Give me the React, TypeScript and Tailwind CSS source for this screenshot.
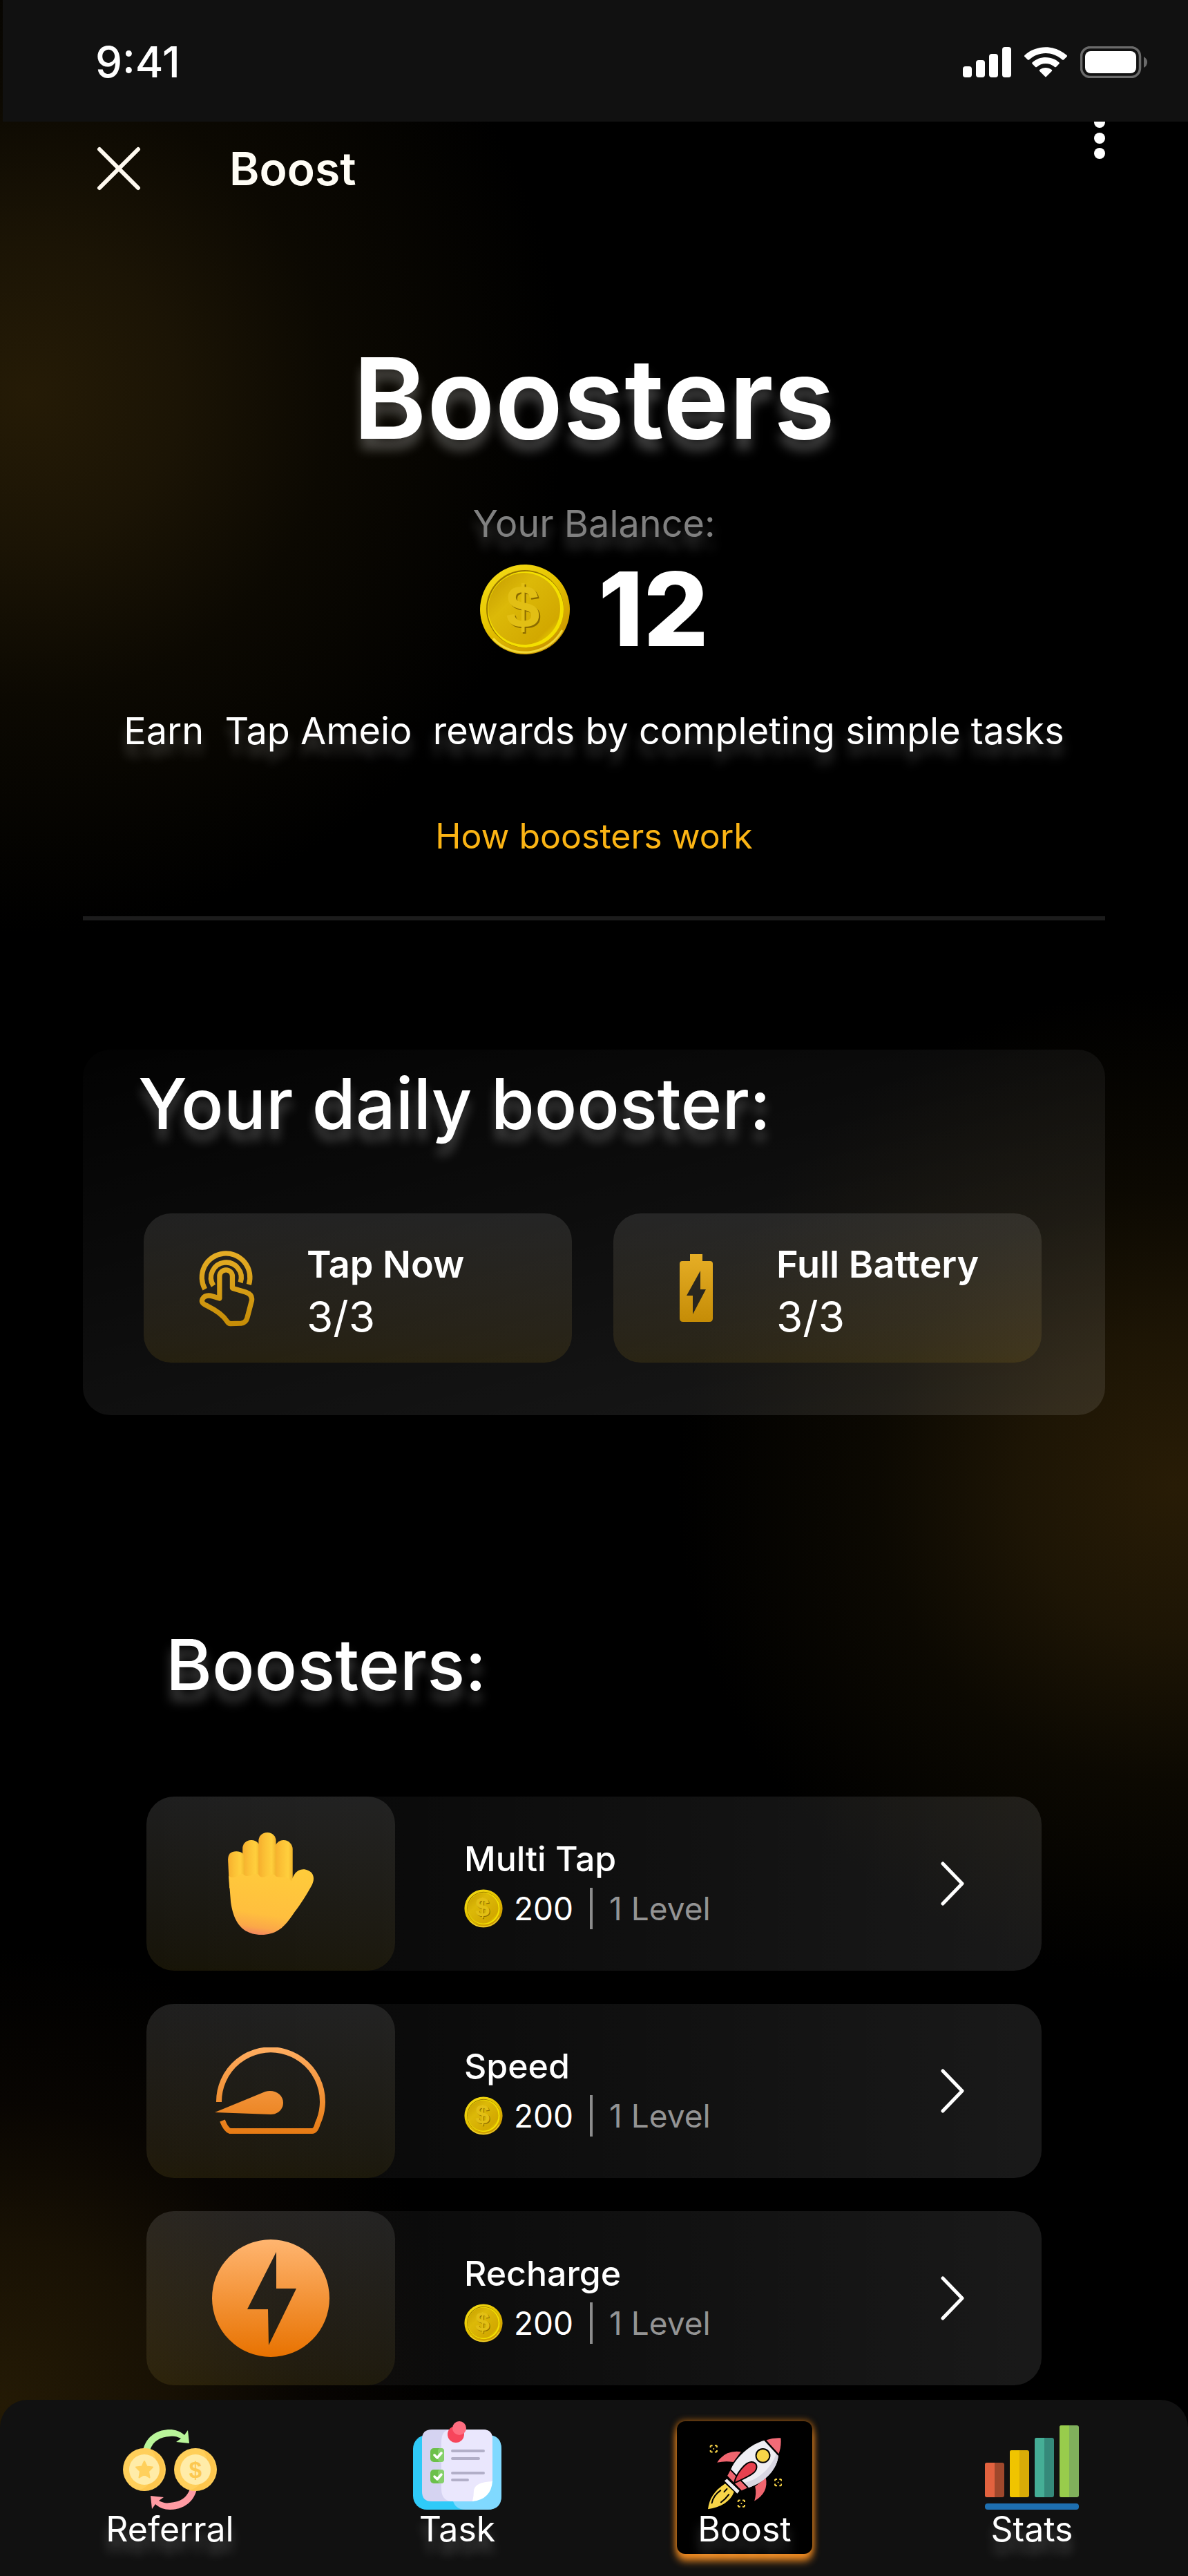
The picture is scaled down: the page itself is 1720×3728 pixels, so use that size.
import type { ReactNode } from "react";

const softGlow = "[text-shadow:0_16px_16px_rgba(255,255,255,0.25)]";

function SignalIcon() {
  return (
    <svg viewBox="0 0 70 44" className="h-[44px] w-[70px]" fill="#fff" aria-hidden="true">
      <rect x="0" y="28" width="13" height="16" rx="4" />
      <rect x="19" y="19" width="13" height="25" rx="4" />
      <rect x="38" y="10" width="13" height="34" rx="4" />
      <rect x="57" y="0" width="13" height="44" rx="4" />
    </svg>
  );
}

function WifiIcon() {
  return (
    <svg viewBox="0.4 0.1 16.2 11.4" className="h-[44px] w-[62px]" fill="#fff" aria-hidden="true">
      <path d="M8.5 2.4c2.3 0 4.6.9 6.3 2.5.1.1.3.1.5 0l1.2-1.2c.1-.1.1-.2.1-.2s0-.2-.1-.3C12-.9 5-.9.5 3.2c0 .1-.1.2-.1.3s0 .2.1.2l1.2 1.2c.1.1.3.1.5 0C3.9 3.3 6.2 2.4 8.5 2.4Z" />
      <path d="M8.5 6.3c1.3 0 2.5.5 3.4 1.3.1.1.3.1.5 0l1.2-1.2c.1-.1.1-.3 0-.5-2.8-2.6-7.4-2.6-10.2 0-.1.1-.1.3 0 .5l1.2 1.2c.1.1.3.1.5 0C6 6.8 7.2 6.3 8.5 6.3Z" />
      <path d="M10.9 9c0 .1 0 .2-.1.2l-2.1 2.1c-.1.1-.1.1-.2.1s-.2 0-.2-.1L6.2 9.2c-.1-.1-.1-.2-.1-.2 0-.1 0-.2.1-.3 1.3-1.1 3.2-1.1 4.6 0 .1.1.1.2.1.3Z" />
    </svg>
  );
}

function BatteryStatusIcon() {
  return (
    <svg viewBox="0 0 98 46" className="h-[46px] w-[98px]" aria-hidden="true">
      <rect x="1.5" y="1.5" width="85" height="43" rx="13" fill="none" stroke="#6b6b6b" strokeWidth="3.5" />
      <rect x="7" y="7" width="74" height="32" rx="8" fill="#fff" />
      <path d="M92 15 V31 Q97 28 97 23 Q97 18 92 15 Z" fill="#6b6b6b" />
    </svg>
  );
}

function CoinIcon({ className }: { className: string }) {
  return (
    <svg viewBox="0 0 132 132" className={className} aria-hidden="true">
      <defs>
        <linearGradient id="coinRim" x1="0" y1="0" x2="0.7" y2="1">
          <stop offset="0" stopColor="#f6e01a" />
          <stop offset="0.5" stopColor="#e6c400" />
          <stop offset="1" stopColor="#c99400" />
        </linearGradient>
        <linearGradient id="coinFace" x1="0" y1="0" x2="1" y2="1">
          <stop offset="0" stopColor="#c39a00" />
          <stop offset="0.35" stopColor="#dcb908" />
          <stop offset="0.8" stopColor="#d2a800" />
          <stop offset="1" stopColor="#ffef00" />
        </linearGradient>
      </defs>
      <circle cx="66" cy="66" r="65" fill="url(#coinRim)" />
      <circle cx="66" cy="65" r="56" fill="#9a7800" />
      <circle cx="67" cy="66" r="55" fill="#f4e000" />
      <circle cx="65" cy="65" r="52" fill="url(#coinFace)" />
      <path d="M20 108 A62 62 0 0 0 120 96" fill="none" stroke="#fff04a" strokeWidth="3" opacity="0.7" />
      <text x="65" y="95" textAnchor="middle" fontFamily="Liberation Sans, sans-serif" fontWeight="700" fontSize="88" fill="#8a6a00">$</text>
      <text x="63" y="93" textAnchor="middle" fontFamily="Liberation Sans, sans-serif" fontWeight="700" fontSize="88" fill="#e2bf14">$</text>
    </svg>
  );
}

function TapIcon() {
  return (
    <svg viewBox="52 52 244 338" className="h-[112px] w-[81px]" fill="none" stroke="url(#tapGold)" strokeWidth="22" aria-hidden="true">
      <defs>
        <linearGradient id="tapGold" gradientUnits="userSpaceOnUse" x1="0" y1="54" x2="0" y2="388">
          <stop offset="0" stopColor="#e6ae26" />
          <stop offset="1" stopColor="#c58c06" />
        </linearGradient>
      </defs>
      <path d="M78 226 A105 105 0 1 1 270 206" />
      <path d="M115 211 A66 66 0 1 1 233 197" />
      <path strokeLinejoin="round" d="M142 266 V170 A28 28 0 0 1 198 170 V222 L256 239 Q288 250 282 278 L263 350 Q258 373 236 375 L190 377 Q181 376 175 367 C155 335 125 317 90 300 C68 290 60 282 68 268 C78 252 98 253 112 257 Z" />
    </svg>
  );
}

function BatteryIcon() {
  return (
    <svg viewBox="0 0 48 98" className="h-[98px] w-[48px]" aria-hidden="true">
      <defs>
        <linearGradient id="batGold" x1="0" y1="0" x2="0" y2="1">
          <stop offset="0" stopColor="#e6ae26" />
          <stop offset="1" stopColor="#c58c06" />
        </linearGradient>
      </defs>
      <path fill="url(#batGold)" fillRule="evenodd" d="M15 0 H33 V10 H44 Q48 10 48 14 V93 Q48 98 43 98 H5 Q0 98 0 93 V14 Q0 10 4 10 H15 Z M30 24 L10 60 H19 V87 L38 51 H30 Z" />
    </svg>
  );
}

function HandIcon() {
  return (
    <svg viewBox="0 0 123 147" className="h-[148px] w-[124px]" aria-hidden="true">
      <defs>
        <linearGradient id="finger" x1="0" y1="0" x2="1" y2="0">
          <stop offset="0" stopColor="#f6ae2e" />
          <stop offset="0.35" stopColor="#fbc035" />
          <stop offset="0.75" stopColor="#ffcf3d" />
          <stop offset="1" stopColor="#f2b52c" />
        </linearGradient>
        <linearGradient id="palm" x1="0.6" y1="0" x2="0.4" y2="1">
          <stop offset="0" stopColor="#ffcb3b" />
          <stop offset="0.7" stopColor="#ffbf3e" />
          <stop offset="0.9" stopColor="#fba848" />
          <stop offset="1" stopColor="#f48a5c" />
        </linearGradient>
      </defs>
      <rect x="67" y="11" width="26" height="70" rx="13" fill="url(#finger)" />
      <rect x="21" y="11" width="25" height="70" rx="12" fill="url(#finger)" />
      <path d="M0 39 Q0 27 12 27 Q24 27 24 39 V80 H2 Z" fill="url(#finger)" />
      <rect x="44" y="0" width="25" height="80" rx="12" fill="url(#finger)" />
      <path fill="url(#palm)" d="M1 62 C8 70 18 57 22 60 C30 68 40 54 45 62 C52 70 62 54 69 63 C76 66 86 62 91 70 C94 61 99 52 110 53 C122 55 126 64 121 75 C114 88 104 104 96 114 C86 128 76 147 48 147 C20 147 8 128 4 100 Z" />
    </svg>
  );
}

function SpeedIcon() {
  return (
    <svg viewBox="0 0 162 126" className="h-[126px] w-[162px]" aria-hidden="true">
      <defs>
        <linearGradient id="speedOrange" gradientUnits="userSpaceOnUse" x1="0" y1="0" x2="0" y2="126">
          <stop offset="0" stopColor="#ffad60" />
          <stop offset="1" stopColor="#e67a13" />
        </linearGradient>
      </defs>
      <path fill="none" stroke="url(#speedOrange)" strokeWidth="8" strokeLinejoin="round" d="M6 79 A75 75 0 1 1 149 110 Q146 121 141 121 H22 Q16 119 11 106" />
      <path fill="url(#speedOrange)" d="M0 94 L73 64 C86 60 99 68 99 80 C99 90 91 97 81 97 Z" />
    </svg>
  );
}

function RechargeIcon() {
  return (
    <svg viewBox="0 0 170 170" className="h-[170px] w-[170px]" aria-hidden="true">
      <defs>
        <linearGradient id="rechargeOrange" x1="0" y1="0" x2="0" y2="1">
          <stop offset="0" stopColor="#ffb570" />
          <stop offset="1" stopColor="#e87200" />
        </linearGradient>
      </defs>
      <path fill="url(#rechargeOrange)" fillRule="evenodd" d="M85 0 A85 85 0 1 1 85 170 A85 85 0 1 1 85 0 Z M93 18 L51 101 H81 L82 153 L122 71 H93 Z" />
    </svg>
  );
}

function ReferralIcon() {
  const arrow = "M29 30 C34 8 52 0 68 0 C76 0 84 3 89 8 L94 1 L96 20 L77 18 L84 13 C78 10 74 9 68 10 C54 11 44 16 39 30 Z";
  return (
    <svg viewBox="0 0 136 116" className="h-[116px] w-[136px]" aria-hidden="true">
      <path d={arrow} fill="#b9f59a" />
      <path d={arrow} fill="#ff9ba3" transform="rotate(180 68 58)" />
      {[31, 105].map((cx) => (
        <g key={cx}>
          <circle cx={cx} cy="58" r="31" fill="#ffcf5a" />
          <path d={`M${cx + 10} 29 A31 31 0 0 1 ${cx - 8} 88 A38 38 0 0 0 ${cx + 10} 29 Z`} fill="#fbbf45" opacity="0.6" />
          <circle cx={cx} cy="58" r="22" fill="#ffeca8" />
        </g>
      ))}
      <path d="M31 46 L34.500 53.500 L43 54.500 L37 60.500 L38.500 69.500 L31 65 L23.500 69.500 L25 60.500 L19 54.500 L27.500 53.500 Z" fill="#ffd05c" stroke="#ffd05c" strokeWidth="2" strokeLinejoin="round" />
      <text x="105" y="70" textAnchor="middle" fontFamily="Liberation Sans, sans-serif" fontWeight="700" fontSize="33" fill="#fcc850">$</text>
    </svg>
  );
}

function TaskIcon() {
  return (
    <svg viewBox="0 0 128 128" className="h-[128px] w-[128px]" aria-hidden="true">
      <rect x="0" y="20" width="128" height="108" rx="20" fill="#2fcaf8" />
      <path d="M57 112 H100 V20 H108 Q128 20 128 40 V108 Q128 128 108 128 H76 Q60 128 57 112 Z" fill="#80d9ff" />
      <path d="M27 12 H101 Q115 12 115 26 V87 L87 116 H27 Q13 116 13 102 V26 Q13 12 27 12 Z" fill="#d5d3f1" />
      <path d="M55 12 H101 Q115 12 115 26 V87 L87 116 H55 Q41 114 41 98 V30 Q41 12 55 12 Z" fill="#eae7fd" />
      <path d="M115 87 Q113 113 86 116 Q88 108 88 100 Q90 88 115 87 Z" fill="#fff" />
      {[39, 70].map((y) => (
        <g key={y}>
          <rect x="25" y={y} width="20" height="20" rx="5" fill="#6cc04a" />
          <rect x="36" y={y} width="9" height="20" rx="4" fill="#86d06c" />
          <path d={`M31 ${y + 10} l4 4 l6 -7`} fill="none" stroke="#fff" strokeWidth="3.500" strokeLinecap="round" strokeLinejoin="round" />
        </g>
      ))}
      <path d="M57 43 H102 M57 54 H95 M57 75 H102 M57 85 H79" stroke="#b2afc8" strokeWidth="4" strokeLinecap="round" />
      <circle cx="62" cy="19" r="12" fill="#f7455b" />
      <circle cx="67" cy="10" r="10" fill="#ff6d80" />
    </svg>
  );
}

function RocketIcon() {
  return (
    <svg viewBox="74 82 322 314" className="h-[104px] w-[108px]" aria-hidden="true">
      <path d="M115 190 Q150 134 219 143 L186 188 Q150 182 115 190 Z" fill="#f0656f" />
      <path d="M278 358 Q288 325 281 295 L328 257 Q341 322 278 358 Z" fill="#f0656f" />
      <path d="M150 282 C100 315 80 350 75 394 C130 385 172 362 189 318 Z" fill="#f8d548" />
      <path d="M92 367 Q98 335 130 312 M132 364 Q150 352 166 330 M146 318 L158 305" fill="none" stroke="#000" strokeWidth="6" strokeLinecap="round" />
      <path d="M327 92 C270 105 200 160 175 220 L250 300 C320 280 380 220 383 155 Z" fill="#efeef3" />
      <path d="M383 155 C380 220 320 280 250 300 L230 279 C290 268 350 220 375 148 Z" fill="#d9d7e2" />
      <path d="M174 222 L160 248 L222 312 L249 300 Z" fill="#f0656f" />
      <path d="M174 222 L250 300" stroke="#000" strokeWidth="6" />
      <path d="M190 280 C196 240 240 186 266 188 C292 190 294 216 276 234 C250 256 220 264 190 280 Z" fill="#e8414f" stroke="#000" strokeWidth="6" />
      <path d="M330 92 Q360 81 393 83 Q397 120 383 155 Z" fill="#f26b77" />
      <path d="M322 90 L384 157" stroke="#000" strokeWidth="7" />
      <circle cx="315" cy="160" r="30" fill="#f8d548" stroke="#000" strokeWidth="6" />
      <path d="M158 262 L147 270 L203 326 L213 313 Z" fill="#efeef3" />
      <path d="M162 257 L218 314" stroke="#000" strokeWidth="6" />
      {[[100, 130], [382, 277], [221, 369]].map(([x, y]) => (
        <g key={x} stroke="#f8d548" fill="none" strokeWidth="6">
          <path d={`M${x - 14} ${y - 6} V${y - 11} L${x - 11} ${y - 14} H${x - 5} M${x + 5} ${y - 14} H${x + 11} L${x + 14} ${y - 11} V${y - 6} M${x + 14} ${y + 6} V${y + 11} L${x + 11} ${y + 14} H${x + 5} M${x - 5} ${y + 14} H${x - 11} L${x - 14} ${y + 11} V${y + 6}`} />
          <circle cx={x} cy={y} r="3" fill="#f8d548" stroke="none" />
        </g>
      ))}
    </svg>
  );
}

function StatsIcon() {
  const bars = [
    { x: 0, y: 54, a: "#e2623f", b: "#9f482c" },
    { x: 36, y: 36, a: "#f0c400", b: "#d9ab08" },
    { x: 72, y: 18, a: "#45ae96", b: "#35897a" },
    { x: 108, y: 0, a: "#98cc4c", b: "#80b05c" },
  ];
  return (
    <svg viewBox="0 0 136 122" className="h-[122px] w-[136px]" aria-hidden="true">
      {bars.map((b) => (
        <g key={b.x}>
          <rect x={b.x} y={b.y} width="28" height={104 - b.y} rx="3" fill={b.b} />
          <path d={`M${b.x + 14} ${b.y} H${b.x + 3} Q${b.x} ${b.y} ${b.x} ${b.y + 3} V101 Q${b.x} 104 ${b.x + 3} 104 H${b.x + 14} Z`} fill={b.a} />
        </g>
      ))}
      <rect x="0" y="113" width="136" height="9" rx="4" fill="#1e6fb0" />
    </svg>
  );
}

function DailyCard({ icon, title, count }: { icon: ReactNode; title: string; count: string }) {
  return (
    <button
      type="button"
      className="flex h-[216px] items-center gap-[68px] rounded-[40px] bg-linear-to-b from-white/10 to-[#e0b010]/11 pl-[72px] text-left"
    >
      <span className="flex w-24 shrink-0 justify-center">{icon}</span>
      <span className="flex flex-col gap-2 pt-3">
        <span className="text-[54px] leading-[64px] font-semibold whitespace-nowrap">{title}</span>
        <span className="text-[62px] leading-[72px]">{count}</span>
      </span>
    </button>
  );
}

function BoosterRow({ icon, title }: { icon: ReactNode; title: string }) {
  return (
    <li>
      <button
        type="button"
        className="flex h-[252px] w-full items-center rounded-[40px] bg-linear-to-r from-white/2 to-white/10 pr-[112px] text-left"
      >
        <span className="flex h-full w-[360px] shrink-0 items-center justify-center rounded-[40px] bg-linear-to-b from-white/10 to-[#c9a80a]/9">
          {icon}
        </span>
        <span className="ml-[100px] flex flex-1 flex-col gap-3">
          <span className="text-[50px] leading-[60px] font-medium">{title}</span>
          <span className="flex h-[60px] items-center text-[46px] leading-[60px]">
            <CoinIcon className="size-14" />
            <span className="ml-4">200</span>
            <span className="mx-6 h-[60px] w-1 bg-[#8c8c8c]" />
            <span className="text-[#949494]">1 Level</span>
          </span>
        </span>
        <svg viewBox="0 0 34 64" className="h-16 w-[34px]" fill="none" stroke="#fff" strokeWidth="5" strokeLinecap="round" strokeLinejoin="round" aria-hidden="true">
          <path d="M3 3 L31 32 L3 61" />
        </svg>
      </button>
    </li>
  );
}

function NavItem({ icon, label, active }: { icon: ReactNode; label: string; active?: boolean }) {
  return (
    <li className="flex justify-center">
      <a
        href="#"
        aria-current={active ? "page" : undefined}
        className={
          active
            ? "flex h-48 w-[196px] flex-col items-center justify-end rounded-[12px] bg-black pb-2 shadow-[0_10px_12px_0_#ee8a22,0_0_8px_2px_#8a4f12]"
            : "flex h-48 w-[196px] flex-col items-center justify-end pb-2"
        }
      >
        {icon}
        <span className={`text-[50px] leading-[56px] ${softGlow}`}>{label}</span>
      </a>
    </li>
  );
}

export default function App() {
  return (
    <div className="min-h-screen bg-black bg-[radial-gradient(circle_at_40px_570px,#251b06_0,#1b1405_220px,#0c0902_440px,transparent_780px),radial-gradient(circle_at_1700px_2150px,#281c06_0,#1d1505_220px,#0c0902_430px,transparent_720px),radial-gradient(circle_at_0_3480px,#241a05_0,#181104_240px,#080502_440px,transparent_660px)] bg-no-repeat font-['Inter','Open_Sans',sans-serif] text-white">
      <header>
        <div className="ml-1 flex h-44 items-center justify-between bg-[#111111] pt-1 pr-[58px] pl-[134px]">
          <time className="text-[62px] leading-[72px] font-medium">9:41</time>
          <div className="flex items-center gap-[19px]">
            <SignalIcon />
            <WifiIcon />
            <BatteryStatusIcon />
          </div>
        </div>
        <div className="flex h-[136px] items-center pr-[118px] pl-[140px]">
          <button type="button" aria-label="Close" className="text-[#fffaf0]">
            <svg viewBox="0 0 64 64" className="size-16" fill="none" stroke="currentColor" strokeWidth="6" strokeLinecap="round" aria-hidden="true">
              <path d="M4 4 L60 60 M60 4 L4 60" />
            </svg>
          </button>
          <span className="ml-32 text-[66px] leading-[80px] font-semibold text-[#fffdf5]">Boost</span>
          <button type="button" aria-label="More options" className="ml-auto self-start">
            <svg viewBox="0 0 20 56" className="h-14 w-5" fill="#fff" aria-hidden="true">
              <circle cx="10" cy="1" r="8" />
              <circle cx="10" cy="24" r="8" />
              <circle cx="10" cy="46" r="8" />
            </svg>
          </button>
        </div>
      </header>

      <main>
        <section className="mx-[120px] flex flex-col items-center border-b-[6px] border-[#1c1c1c] pt-[168px] pb-[84px] text-center">
          <h1 className={`text-[162px] leading-[192px] font-semibold ${softGlow}`}>Boosters</h1>
          <p className={`mt-[54px] text-[54px] leading-[64px] text-[#808080] ${softGlow}`}>Your Balance:</p>
          <div className="mt-[26px] flex items-center gap-10">
            <CoinIcon className="size-[132px]" />
            <span className="text-[148px] leading-[132px] font-extrabold">12</span>
          </div>
          <p className={`mt-[78px] text-[54px] leading-[64px] whitespace-pre ${softGlow}`}>
            {"Earn  Tap Ameio  rewards by completing simple tasks"}
          </p>
          <a href="#" className="mt-[88px] text-[50px] leading-[64px] text-[#fbb414]">
            How boosters work
          </a>
        </section>

        <section className="mx-[120px] mt-[187px] rounded-[40px] bg-linear-[165deg] from-white/1 to-white/10 pt-[14px] pr-[92px] pb-[76px] pl-[88px]">
          <h2 className={`-ml-2 text-[102px] leading-[128px] font-medium ${softGlow}`}>Your daily booster:</h2>
          <div className="mt-[95px] grid grid-cols-2 gap-[60px]">
            <DailyCard icon={<TapIcon />} title="Tap Now" count="3/3" />
            <DailyCard icon={<BatteryIcon />} title="Full Battery" count="3/3" />
          </div>
        </section>

        <section className="mx-[212px] mt-[297px]">
          <h2 className={`pl-7 text-[102px] leading-[128px] font-medium ${softGlow}`}>Boosters:</h2>
          <ul className="mt-[127px] flex flex-col gap-12">
            <BoosterRow icon={<HandIcon />} title="Multi Tap" />
            <BoosterRow icon={<SpeedIcon />} title="Speed" />
            <BoosterRow icon={<RechargeIcon />} title="Recharge" />
          </ul>
        </section>
      </main>

      <nav aria-label="Main" className="mt-[21px] rounded-t-[40px] bg-[#111111] pt-[31px] pb-8">
        <ul className="grid grid-cols-4 pr-[18px] pl-[38px]">
          <NavItem icon={<ReferralIcon />} label="Referral" />
          <NavItem icon={<TaskIcon />} label="Task" />
          <NavItem icon={<RocketIcon />} label="Boost" active />
          <NavItem icon={<StatsIcon />} label="Stats" />
        </ul>
      </nav>
    </div>
  );
}
